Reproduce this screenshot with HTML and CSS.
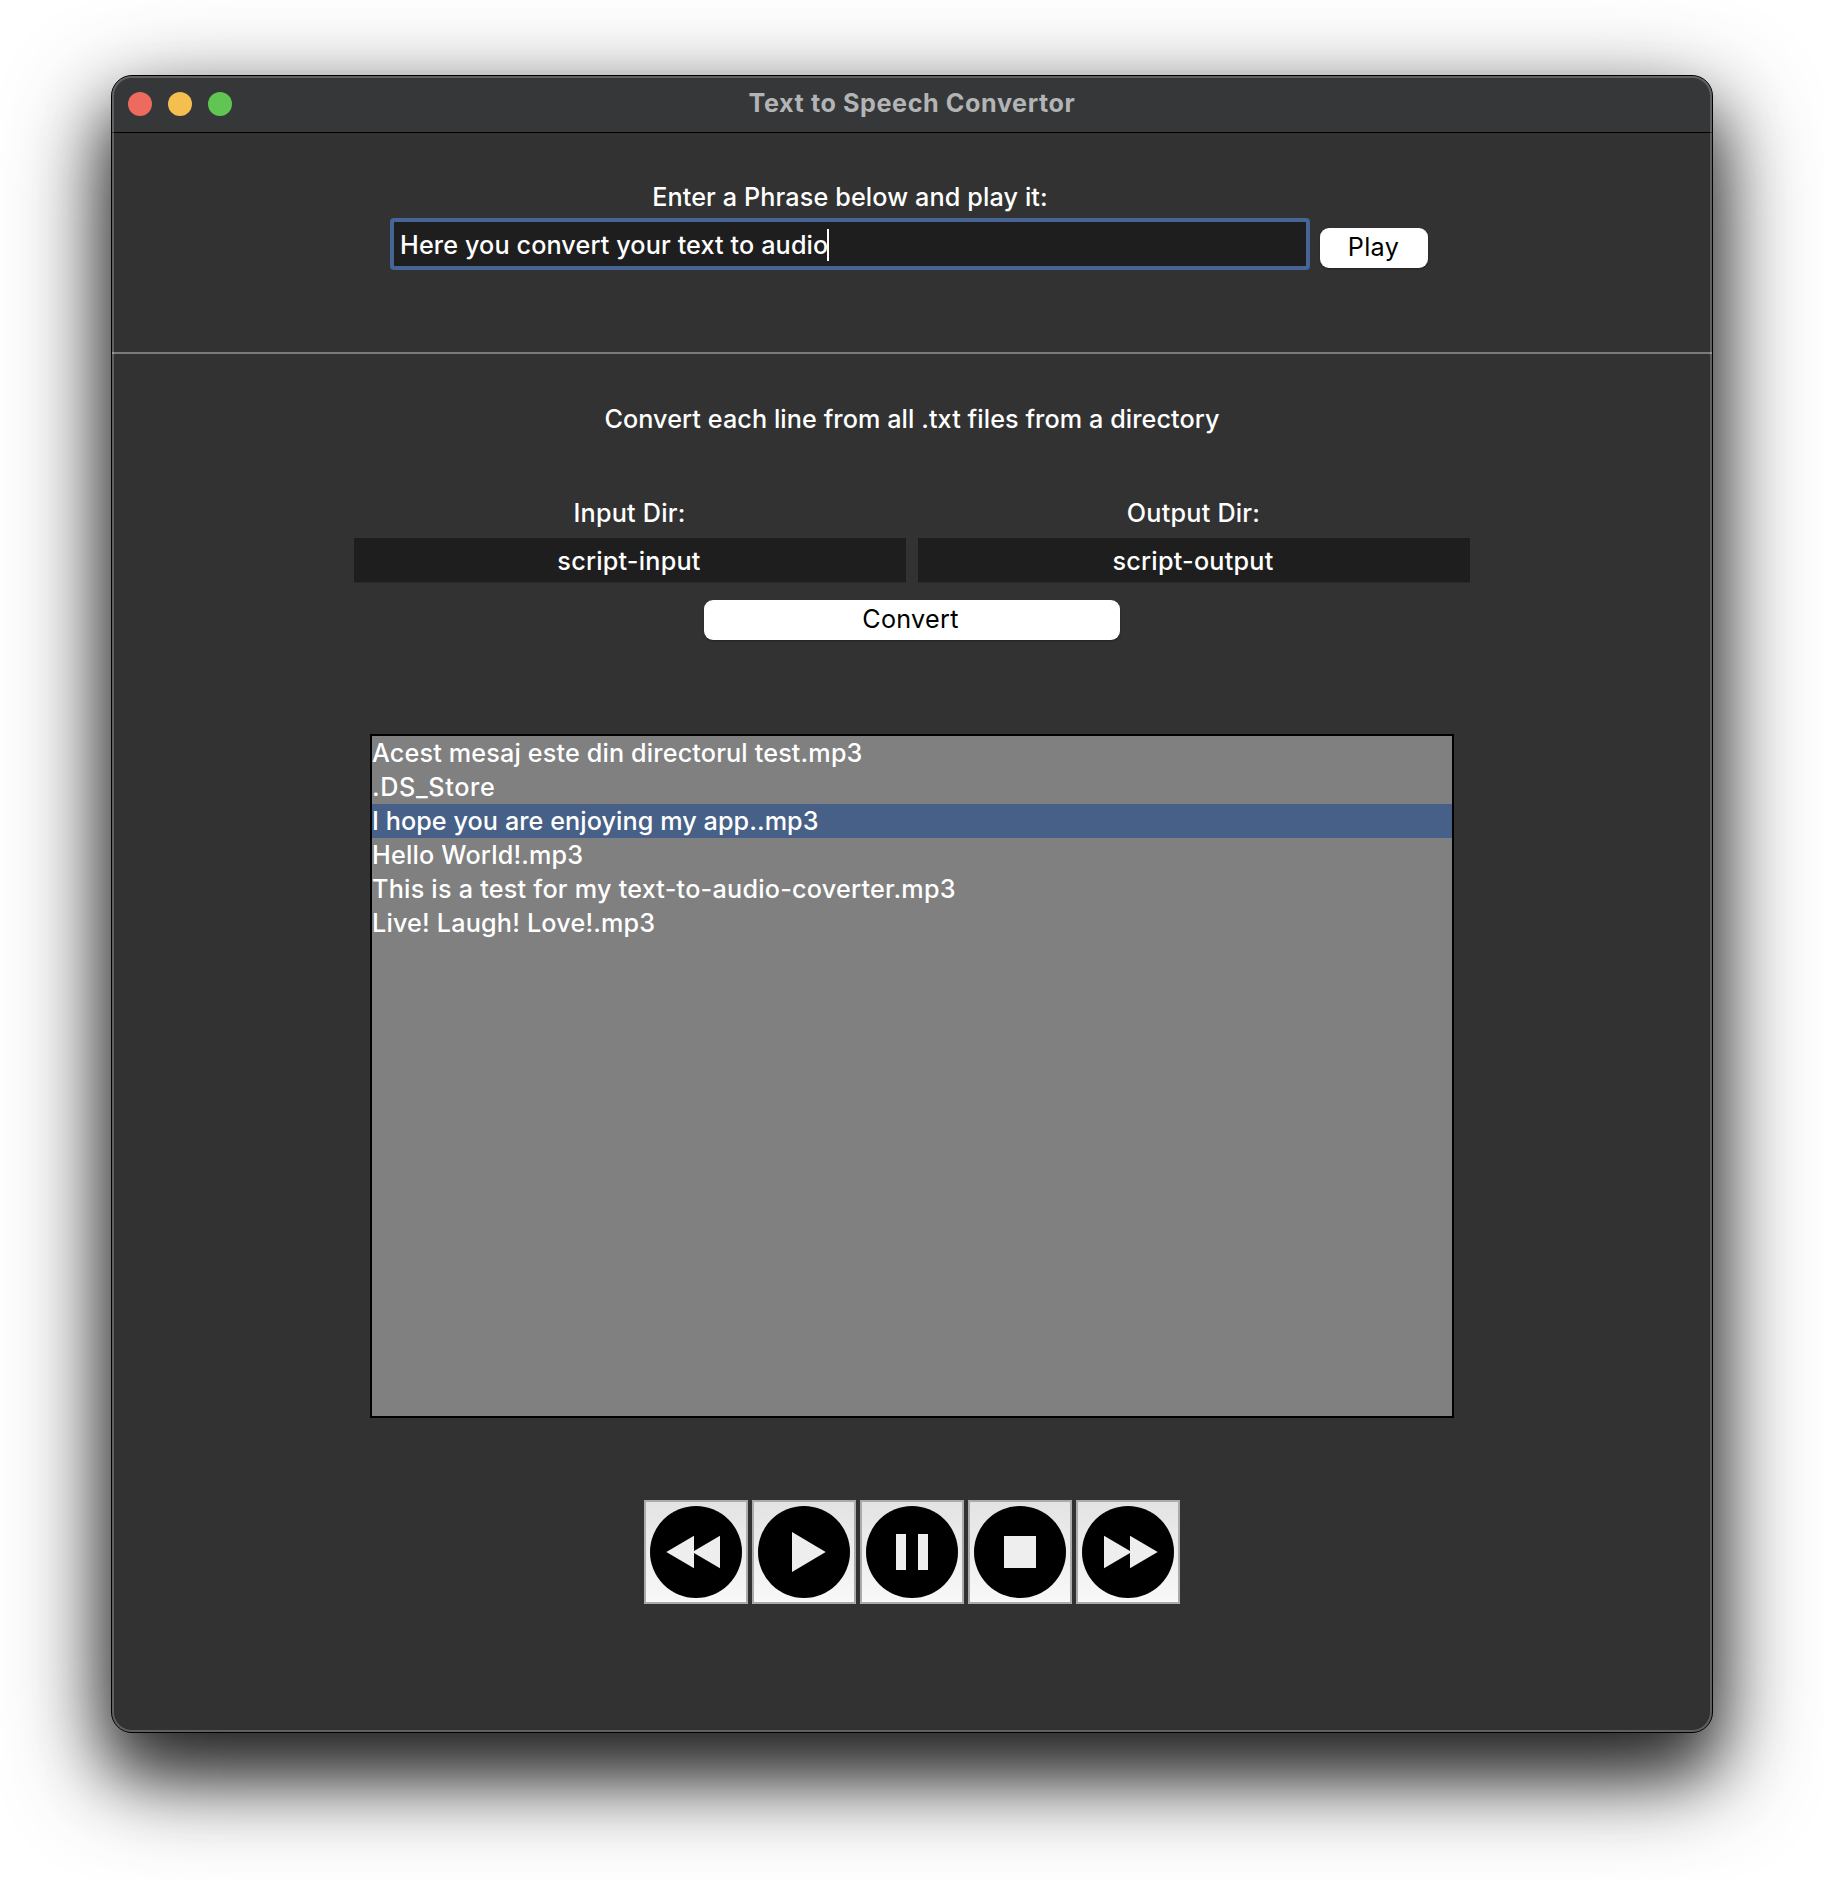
FILE: index.html
```
<!DOCTYPE html>
<html lang="en">
<head>
<meta charset="utf-8">
<title>Text to Speech Convertor</title>
<link rel="stylesheet" href="styles.css">
</head>
<body>
<main class="window">
  <header class="titlebar">
    <div class="lights"><span class="light close"></span><span class="light minimize"></span><span class="light zoom"></span></div>
    <h1 class="title">Text to Speech Convertor</h1>
    <div class="spacer"></div>
  </header>

  <section class="phrase">
    <div class="phrase-field">
      <label class="label">Enter a Phrase below and play it:</label>
      <div class="entry entry-focus"><span class="entry-text">Here you convert your text to audio</span><span class="caret"></span></div>
    </div>
    <button class="button play-button">Play</button>
  </section>

  <section class="convert">
    <p class="label heading">Convert each line from all .txt files from a directory</p>
    <div class="dirs">
      <div class="dir">
        <label class="label dir-label">Input Dir:</label>
        <div class="entry dir-entry">script-input</div>
      </div>
      <div class="dir">
        <label class="label dir-label">Output Dir:</label>
        <div class="entry dir-entry">script-output</div>
      </div>
    </div>
    <button class="button convert-button">Convert</button>
  </section>

  <ul class="files">
    <li class="file acest">Acest mesaj este din directorul test.mp3</li>
    <li class="file store">.DS_Store</li>
    <li class="file hope selected">I hope you are enjoying my app..mp3</li>
    <li class="file short">Hello World!.mp3</li>
    <li class="file">This is a test for my text-to-audio-coverter.mp3</li>
    <li class="file short">Live! Laugh! Love!.mp3</li>
  </ul>

  <nav class="controls">
    <button class="control" aria-label="Previous"><svg class="icon" viewBox="2 2 100 100"><circle cx="52" cy="52" r="46"/><path class="glyph" d="M22.3 52 50 35.7V51L76 35.7V68.3L50 53V68.3Z"/></svg></button>
    <button class="control" aria-label="Play"><svg class="icon" viewBox="2 2 100 100"><circle cx="52" cy="52" r="46"/><path class="glyph" d="M40 32 73.7 52 40 72Z"/></svg></button>
    <button class="control" aria-label="Pause"><svg class="icon" viewBox="2 2 100 100"><circle cx="52" cy="52" r="46"/><path class="glyph" d="M36 34H46V70H36ZM58 34H68V70H58Z"/></svg></button>
    <button class="control" aria-label="Stop"><svg class="icon" viewBox="2 2 100 100"><circle cx="52" cy="52" r="46"/><path class="glyph" d="M36 36H68V68H36Z"/></svg></button>
    <button class="control" aria-label="Next"><svg class="icon" viewBox="2 2 100 100"><circle cx="52" cy="52" r="46"/><path class="glyph" d="M81.7 52 54 35.7V51L28 35.7V68.3L54 53V68.3Z"/></svg></button>
  </nav>
</main>
</body>
</html>
```
FILE: styles.css
```
* { box-sizing: border-box; }

body {
  margin: 0;
  padding: 75px 111px 0;
  height: 1880px;
  overflow: hidden;
  background: #fff;
  color: #fff;
  font: 450 25.2px/32px Inter, "Liberation Sans", sans-serif;
  letter-spacing: 0.12px;
}

h1, p, ul { margin: 0; padding: 0; }

.window {
  position: relative;
  display: flex;
  flex-direction: column;
  width: 1602px;
  height: 1658px;
  border: 1px solid #000;
  border-radius: 21px;
  background: #323232;
  box-shadow: 0 36px 100px rgba(0, 0, 0, 0.8), 0 38px 60px rgba(0, 0, 0, 0.5);
}

/* light rim just inside the window edge */
.window::after {
  content: "";
  position: absolute;
  inset: 0;
  border: 2px solid rgba(255, 255, 255, 0.22);
  border-radius: 20px;
  pointer-events: none;
}

.titlebar {
  display: grid;
  grid-template-columns: 1fr auto 1fr;
  align-items: center;
  height: 57px;
  padding: 0 16px;
  border-bottom: 1px solid #000;
  border-radius: 20px 20px 0 0;
  background: #363739;
}
.lights { display: flex; gap: 16px; }
.light { width: 24px; height: 24px; border-radius: 50%; }
.close { background: #ec6a5e; }
.minimize { background: #f4bf4f; }
.zoom { background: #61c554; }
.title {
  padding-bottom: 2px;
  color: #b3b4b5;
  font-size: 25.2px;
  font-weight: 700;
  letter-spacing: 0.57px;
}

.phrase {
  display: flex;
  align-items: flex-end;
  gap: 10px;
  height: 221px;
  padding: 0 0 82px 278px;
  border-bottom: 2px solid #7a7a7a;
}
.phrase-field {
  display: flex;
  flex-direction: column;
  gap: 5px;
  width: 920px;
}
.label { text-align: center; }
.entry {
  display: flex;
  align-items: center;
  height: 44px;
  padding-top: 1px;
  background: #1e1e1e;
}
.entry-focus {
  height: 52px;
  padding-left: 6px;
  border: 4px solid #466495;
  border-radius: 4px;
}
.entry-text { margin-right: -1px; }
.caret { width: 2px; height: 32px; background: #fff; }

.button {
  height: 40px;
  padding: 0 0 2px;
  border: 0;
  border-radius: 9px;
  background: #fff;
  color: #000;
  font: inherit;
  font-weight: 400;
  letter-spacing: 0.3px;
  box-shadow: 0 1px 2px rgba(0, 0, 0, 0.35);
}
.play-button { width: 108px; margin-bottom: 2px; padding-right: 1px; }

.convert {
  display: flex;
  flex-direction: column;
  align-items: center;
  padding-top: 49px;
}
.heading { letter-spacing: 0.08px; }
.dirs { display: flex; gap: 12px; margin: 62px 0 18px; }
.dir {
  display: flex;
  flex-direction: column;
  gap: 9px;
  width: 552px;
  letter-spacing: 0.22px;
}
.dir-label { padding-right: 1px; letter-spacing: 0.22px; }
.dir-entry { justify-content: center; padding-right: 2px; box-shadow: 0 1px 0 #2a2a2a; }
.convert-button { width: 416px; padding-right: 3px; }

.files {
  align-self: center;
  width: 1084px;
  height: 684px;
  margin-top: 94px;
  border: 2px solid #000;
  background: #808080;
  list-style: none;
  letter-spacing: 0.23px;
}
.file { height: 34px; line-height: 34px; white-space: nowrap; }
.acest { letter-spacing: 0.15px; }
.store { letter-spacing: 0.65px; }
.hope { letter-spacing: 0.07px; }
.short { letter-spacing: 0.18px; }
.selected { background: #466087; }

.controls {
  display: flex;
  justify-content: center;
  gap: 4px;
  margin-top: 82px;
}
.control {
  width: 104px;
  height: 104px;
  padding: 0;
  border: 2px solid #ababab;
  background: linear-gradient(#e3e3e3, #f8f8f8);
}
.icon { display: block; width: 100px; height: 100px; }
.glyph { fill: #eee; }
```
